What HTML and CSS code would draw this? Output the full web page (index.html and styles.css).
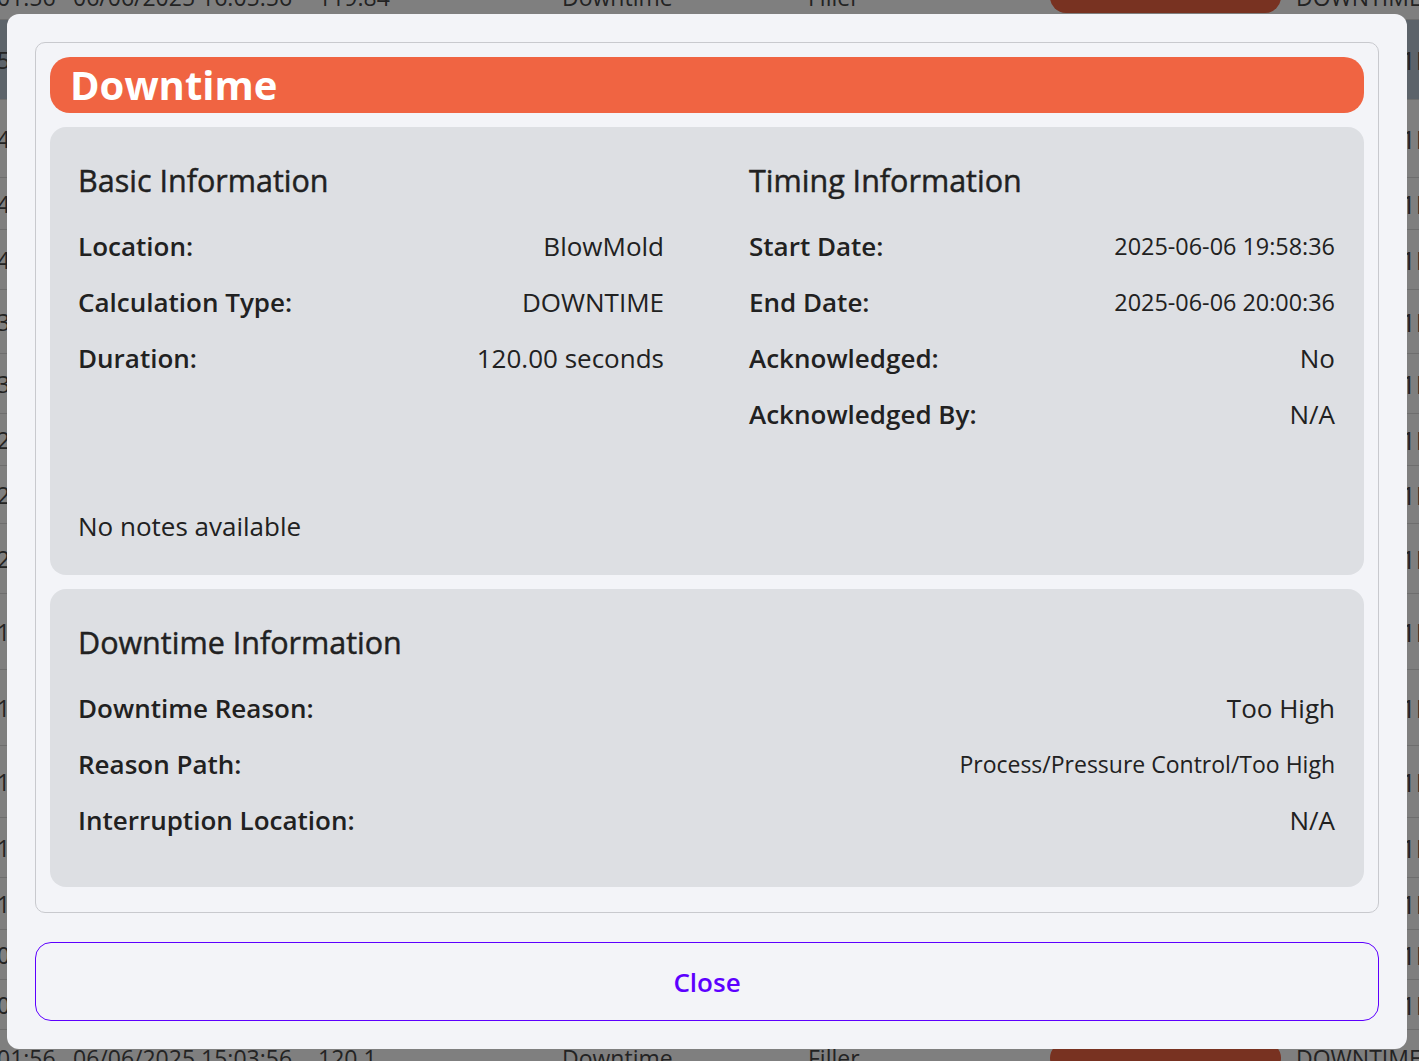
FILE: index.html
```html
<!DOCTYPE html>
<html lang="en">
<head>
<meta charset="utf-8">
<title>Downtime details</title>
<link rel="stylesheet" href="styles.css">
</head>
<body>
<div class="app">
  <div class="table">
    <div class="trow h-top">
      <span class="c1">01:56</span><span class="c2">06/06/2025 16:05:56</span><span class="c3">119.84</span><span class="c4">Downtime</span><span class="c5">Filler</span><span class="c6"><span class="pill"></span></span><span class="c7">DOWNTIME</span>
    </div>
    <div class="trow h-80 selected"><span class="c1">56.2</span><span class="c7 id">1E</span></div>
    <div class="trow h-78"><span class="c1">43.1</span><span class="c7 id">1E</span></div>
    <div class="trow h-52"><span class="c1">41.7</span><span class="c7 id">1E</span></div>
    <div class="trow h-60"><span class="c1">41.2</span><span class="c7 id">1E</span></div>
    <div class="trow h-64"><span class="c1">30.5</span><span class="c7 id">1E</span></div>
    <div class="trow h-60"><span class="c1">34.8</span><span class="c7 id">1E</span></div>
    <div class="trow h-52"><span class="c1">23.1</span><span class="c7 id">1E</span></div>
    <div class="trow h-58"><span class="c1">24.0</span><span class="c7 id">1E</span></div>
    <div class="trow h-70"><span class="c1">2.15</span><span class="c7 id">1E</span></div>
    <div class="trow h-76"><span class="c1">13.3</span><span class="c7 id">1E</span></div>
    <div class="trow h-76"><span class="c1">10.6</span><span class="c7 id">1E</span></div>
    <div class="trow h-72"><span class="c1">14.4</span><span class="c7 id">1E</span></div>
    <div class="trow h-60"><span class="c1">11.2</span><span class="c7 id">1E</span></div>
    <div class="trow h-52"><span class="c1">17.9</span><span class="c7 id">1E</span></div>
    <div class="trow h-50"><span class="c1">07.2</span><span class="c7 id">1E</span></div>
    <div class="trow h-50"><span class="c1">04.1</span><span class="c7 id">1E</span></div>
    <div class="trow h-56">
      <span class="c1">01:56</span><span class="c2">06/06/2025 15:03:56</span><span class="c3">120.1</span><span class="c4">Downtime</span><span class="c5">Filler</span><span class="c6"><span class="pill"></span></span><span class="c7">DOWNTIME</span>
    </div>
  </div>
</div>

<div class="backdrop">
  <div class="modal">
    <div class="card">
      <div class="title-bar">
        <h2 class="title">Downtime</h2>
      </div>

      <section class="panel">
        <div class="cols">
          <div class="col">
            <h3 class="panel-title">Basic Information</h3>
            <div class="field"><span class="label">Location:</span><span class="value">BlowMold</span></div>
            <div class="field"><span class="label">Calculation Type:</span><span class="value">DOWNTIME</span></div>
            <div class="field"><span class="label">Duration:</span><span class="value">120.00 seconds</span></div>
          </div>
          <div class="col">
            <h3 class="panel-title">Timing Information</h3>
            <div class="field"><span class="label">Start Date:</span><span class="value small">2025-06-06 19:58:36</span></div>
            <div class="field"><span class="label">End Date:</span><span class="value small">2025-06-06 20:00:36</span></div>
            <div class="field"><span class="label">Acknowledged:</span><span class="value">No</span></div>
            <div class="field"><span class="label">Acknowledged By:</span><span class="value">N/A</span></div>
          </div>
        </div>
        <p class="notes">No notes available</p>
      </section>

      <section class="panel">
        <h3 class="panel-title">Downtime Information</h3>
        <div class="field"><span class="label">Downtime Reason:</span><span class="value">Too High</span></div>
        <div class="field"><span class="label">Reason Path:</span><span class="value small path">Process/Pressure Control/Too High</span></div>
        <div class="field"><span class="label">Interruption Location:</span><span class="value">N/A</span></div>
      </section>
    </div>

    <button class="close-btn" type="button">Close</button>
  </div>
</div>
</body>
</html>
```

FILE: styles.css
```css
* {
  box-sizing: border-box;
}

html, body {
  margin: 0;
  padding: 0;
  height: 100%;
  overflow: hidden;
}

body {
  font-family: "Open Sans", "Noto Sans", "Liberation Sans", sans-serif;
  background: #ffffff;
  color: #212121;
}

/* ---------- underlying page (table) ---------- */
.app {
  height: 100%;
  overflow: hidden;
}

.table {
  margin-top: -26px;
  margin-left: -3px;
}

.trow {
  display: grid;
  grid-template-columns: 76px 245px 244px 246px 242px 246px 1fr;
  align-items: center;
  border-bottom: 1px solid #dcdcdc;
  font-size: 23px;
  color: #474747;
  white-space: nowrap;
  overflow: hidden;
}

.trow.selected {
  background: #b9c7d5;
}

.h-top { height: 46px; }
.h-50 { height: 50px; }
.h-52 { height: 52px; }
.h-56 { height: 56px; }
.h-58 { height: 58px; }
.h-60 { height: 60px; }
.h-64 { height: 64px; }
.h-70 { height: 70px; }
.h-72 { height: 72px; }
.h-76 { height: 76px; }
.h-78 { height: 78px; }
.h-80 { height: 80px; }

.c1 { grid-column: 1; }
.c2 { grid-column: 2; }
.c3 { grid-column: 3; }
.c4 { grid-column: 4; }
.c5 { grid-column: 5; }
.c6 { grid-column: 6; }
.c7 { grid-column: 7; }

.c7.id {
  padding-left: 105px;
  font-size: 26px;
}

.pill {
  display: block;
  width: 231px;
  height: 32px;
  border-radius: 16px;
  background: #f06442;
}

/* ---------- modal ---------- */
.backdrop {
  position: fixed;
  inset: 0;
  background: rgba(0, 0, 0, 0.5);
  display: flex;
  padding: 14px 12px 12px 7px;
}

.modal {
  flex: 1;
  background: #f3f4f8;
  border-radius: 12px;
  padding: 28px;
  display: flex;
  flex-direction: column;
  gap: 29px;
}

.card {
  border: 1px solid #c8c9ce;
  border-radius: 10px;
  padding: 14px 14px 25px;
  display: flex;
  flex-direction: column;
  gap: 14px;
}

.title-bar {
  height: 56px;
  background: #f06442;
  border-radius: 20px;
  padding: 0 20px;
}

.title {
  margin: 0;
  font-size: 40px;
  line-height: 56px;
  font-weight: 700;
  color: #ffffff;
}

.panel {
  background: #dddfe3;
  border-radius: 16px;
  padding: 28px 29px 32px 28px;
}

.cols {
  display: grid;
  grid-template-columns: 1fr 1fr;
  column-gap: 85px;
}

.panel-title {
  margin: 0 0 22px;
  font-size: 30.5px;
  line-height: 50px;
  font-weight: 400;
  -webkit-text-stroke: 0.45px #212121;
  color: #212121;
}

.field {
  display: flex;
  justify-content: space-between;
  align-items: center;
  height: 42px;
  margin-bottom: 14px;
}

.cols .col .panel-title + .field,
.panel > .panel-title + .field {
  margin-top: -2px;
}

.label {
  font-size: 26px;
  font-weight: 600;
  color: #212121;
}

.value {
  font-size: 26px;
  font-weight: 400;
  color: #212121;
}

.value.small {
  font-size: 23.4px;
}

.value.path {
  font-size: 23px;
}

.notes {
  margin: 60px 0 0;
  font-size: 26px;
  line-height: 34px;
  color: #212121;
}

.close-btn {
  height: 79px;
  flex: none;
  background: transparent;
  border: 1px solid #5d00ff;
  border-radius: 16px;
  font-family: inherit;
  font-size: 26px;
  font-weight: 600;
  color: #5d00ff;
  cursor: pointer;
}
```
